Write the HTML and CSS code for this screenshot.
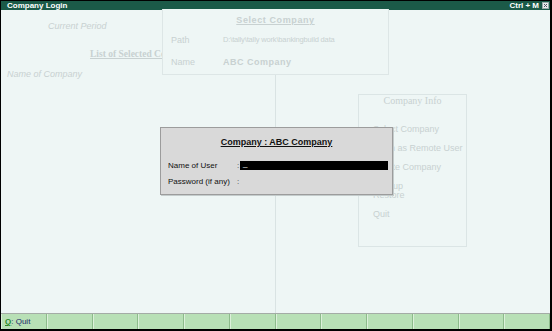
FILE: index.html
```html
<!DOCTYPE html>
<html lang="en">
<head>
    <meta charset="UTF-8">
    <title>Company Login</title>
    <link rel="stylesheet" href="styles.css">
</head>
<body>
    <div class="window">
        <div class="titlebar">
            <span class="title">Company Login</span>
            <span class="shortcut">Ctrl + M</span>
            <span class="close">
                <svg width="7" height="7" viewBox="0 0 7 7">
                    <rect x="0.5" y="0.5" width="6" height="6" fill="#e8ecec" stroke="#9aa" stroke-width="1"/>
                    <path d="M2 2 L5 5 M5 2 L2 5" stroke="#556" stroke-width="1"/>
                </svg>
            </span>
        </div>

        <div class="main">
            <div class="col-left">
                <div class="faded italic period">Current Period</div>
                <div class="faded serif list-head">List of Selected Co</div>
                <div class="faded italic comp-name">Name of Company</div>
                <div class="last-entry"></div>
            </div>
            <div class="col-right">
                <div class="info-box">
                    <div class="faded serif info-title">Company Info</div>
                    <div class="faded info-item">Select Company</div>
                    <div class="faded info-item">Login as Remote User</div>
                    <div class="faded info-item">Create Company</div>
                    <div class="faded info-item tight">Backup</div>
                    <div class="faded info-item restore">Restore</div>
                    <div class="faded info-item">Quit</div>
                </div>
            </div>

            <!-- panel lying over both columns -->
            <div class="select-box">
                <div class="faded select-title">Select Company</div>
                <div class="select-row">
                    <span class="faded select-label">Path</span>
                    <span class="faded path">D:\tally\tally work\bankingbuild data</span>
                </div>
                <div class="select-row">
                    <span class="faded select-label">Name</span>
                    <span class="faded select-name">ABC Company</span>
                </div>
            </div>

            <div class="dialog">
                <div class="dialog-title">Company : ABC Company</div>
                <div class="field">
                    <span class="field-label">Name of User</span>
                    <span class="colon">:</span>
                    <span class="input"><span class="cursor">_</span></span>
                </div>
                <div class="field">
                    <span class="field-label">Password (if any)</span>
                    <span class="colon">:</span>
                </div>
            </div>
        </div>

        <div class="buttonbar">
            <div class="btn"><span class="key">Q</span>: Quit</div>
            <div class="btn"></div>
            <div class="btn"></div>
            <div class="btn"></div>
            <div class="btn"></div>
            <div class="btn"></div>
            <div class="btn"></div>
            <div class="btn"></div>
            <div class="btn"></div>
            <div class="btn"></div>
            <div class="btn"></div>
            <div class="btn"></div>
        </div>
    </div>
</body>
</html>
```

FILE: styles.css
```css
body {
    margin: 0;
    background: #000;
    font-family: "Liberation Sans", Arial, sans-serif;
}

.window {
    width: 552px;
    height: 331px;
    box-sizing: border-box;
    border-style: solid;
    border-color: #000;
    border-width: 1px 2px 2px 1px;
    display: flex;
    flex-direction: column;
    background: #eef6f5;
}

.titlebar {
    height: 9px;
    background: #1b5a48;
    color: #fff;
    display: flex;
    align-items: center;
    padding: 0 1px 0 6px;
    font-size: 8px;
    font-weight: bold;
    line-height: 9px;
}

.title {
    flex: 1;
}

.shortcut {
    margin-right: 3px;
}

.close {
    display: flex;
}

.main {
    flex: 1;
    position: relative;
    display: grid;
    grid-template-columns: 275px 1fr;
    border-bottom: 1px solid #a4aca6;
}

.faded {
    color: #c8d1d1;
}

.italic {
    font-style: italic;
    font-size: 9px;
}

.serif {
    font-family: "Liberation Serif", "Times New Roman", serif;
    font-weight: bold;
    font-size: 10px;
}

.col-left {
    border-right: 1px solid #d9e3e3;
}

.period {
    margin: 10px 0 0 47px;
    line-height: 12px;
}

.list-head {
    margin: 16px 0 0 89px;
    font-size: 9.5px;
    white-space: nowrap;
    line-height: 12px;
    text-decoration: underline;
}

.comp-name {
    margin: 8px 0 0 6px;
    line-height: 12px;
}

.last-entry {
    margin: -9px 0 0 210px;
    width: 62px;
    border-top: 1px dashed #d0d9d9;
}

.info-box {
    margin: 84px 0 0 82px;
    width: 109px;
    height: 153px;
    box-sizing: border-box;
    border: 1px solid #dbe5e5;
    padding: 0 0 0 14px;
}

.info-title {
    margin: 1px 0 18px -14px;
    text-align: center;
    font-weight: normal;
    line-height: 10px;
}

.info-item {
    font-size: 9px;
    line-height: 10px;
    margin-bottom: 9px;
}

.info-item.tight {
    margin-bottom: -1px;
}

.select-box {
    position: absolute;
    left: 161px;
    top: -1px;
    width: 227px;
    height: 66px;
    box-sizing: border-box;
    background: #eef6f5;
    border: 1px solid #dde6e6;
    border-top: none;
    padding: 6px 0 0 8px;
}

.select-title {
    text-align: center;
    font-size: 9px;
    font-weight: bold;
    letter-spacing: 0.6px;
    line-height: 10px;
    margin: 0 0 9px -8px;
    text-decoration: underline;
}

.select-row {
    display: flex;
    align-items: center;
    height: 11px;
    margin-bottom: 11px;
}

.select-label {
    width: 52px;
    font-size: 9px;
}

.path {
    font-size: 7.5px;
    letter-spacing: -0.15px;
}

.select-name {
    font-size: 9px;
    font-weight: bold;
    letter-spacing: 0.5px;
}

.dialog {
    position: absolute;
    left: 159px;
    top: 117px;
    width: 233px;
    height: 68px;
    box-sizing: border-box;
    background: #d9d9d9;
    border: 1px solid #9c9c9c;
    box-shadow: 1px 1px 0 #c4cccc;
    padding: 9px 3px 0 7px;
    font-size: 8px;
    color: #111;
}

.dialog-title {
    text-align: center;
    font-weight: bold;
    font-size: 9px;
    line-height: 10px;
    text-decoration: underline;
    margin: 0 0 13px -4px;
}

.field {
    display: flex;
    align-items: center;
    height: 10px;
    margin-bottom: 6px;
}

.field-label {
    width: 69px;
}

.colon {
    width: 3px;
    color: #444;
}

.input {
    width: 148px;
    height: 9px;
    background: #000;
    color: #fff;
    font-size: 8px;
    line-height: 6px;
    padding-left: 3px;
    box-sizing: border-box;
}

.buttonbar {
    height: 15px;
    display: grid;
    grid-template-columns: repeat(12, 1fr);
    background: #b8e0b6;
}

.btn {
    border-left: 1px solid #dcf0da;
    border-right: 1px solid #8dbb8b;
    font-size: 8px;
    line-height: 15px;
    padding-left: 3px;
    color: #1c2a6a;
}

.key {
    color: #2a8a2a;
    text-decoration: underline;
    font-weight: bold;
}
```
